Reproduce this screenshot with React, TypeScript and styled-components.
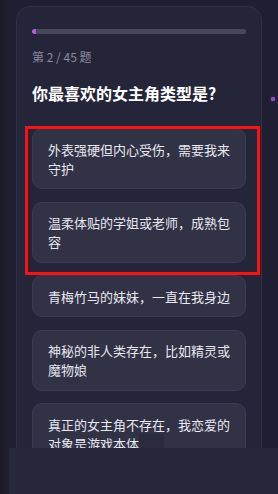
import styled, { createGlobalStyle } from 'styled-components';

const options = [
	'外表强硬但内心受伤，需要我来守护',
	'温柔体贴的学姐或老师，成熟包容',
	'青梅竹马的妹妹，一直在我身边',
	'神秘的非人类存在，比如精灵或魔物娘',
	'真正的女主角不存在，我恋爱的对象是游戏本体',
];

const current = 2;
const total = 45;

function App() {
	return (
		<>
			<GlobalStyle />
			<Page>
				<Card>
					<ProgressTrack>
						<ProgressFill style={{ width: `${(current / total) * 100}%` }} />
					</ProgressTrack>
					<Counter>
						第 {current} / {total} 题
					</Counter>
					<Title>你最喜欢的女主角类型是?</Title>
					<OptionList>
						{options.map((text) => (
							<Option key={text}>{text}</Option>
						))}
					</OptionList>
				</Card>
				<GlowDot />
				<Highlight />
				<CaretPatch />
				<BottomShade />
			</Page>
		</>
	);
}

const GlobalStyle = createGlobalStyle`
	html, body {
		margin: 0;
		padding: 0;
		background: #1c1c2d;
	}
	* {
		box-sizing: border-box;
	}
`;

const Page = styled.div`
	position: relative;
	height: 494px;
	overflow: hidden;
	padding: 6px 16px 0;
	background: linear-gradient(90deg, #1a1a29 0px, #1f1f31 9px, #1f1f31 100%);
	font-family: 'Noto Sans CJK SC', 'Noto Sans', sans-serif;
`;

const Card = styled.div`
	background: #25253a;
	border: 1px solid #2f2f46;
	border-radius: 14px;
	padding: 22px 15px 20px;
	min-height: 520px;
`;

const ProgressTrack = styled.div`
	height: 5px;
	border-radius: 3px;
	background: #47475c;
	overflow: hidden;
`;

const ProgressFill = styled.div`
	height: 100%;
	max-width: 4px;
	background: linear-gradient(90deg, #e055c8, #9b5cf0);
	border-radius: 3px 0 0 3px;
`;

const Counter = styled.div`
	margin-top: 15px;
	font-size: 12px;
	line-height: 16px;
	color: #8b8b9d;
`;

const Title = styled.h1`
	margin: 17px 0 0;
	font-size: 16px;
	line-height: 22px;
	font-weight: 700;
	color: #ffffff;
`;

const OptionList = styled.div`
	margin-top: 24px;
	display: flex;
	flex-direction: column;
	gap: 12.5px;
`;

const Option = styled.div`
	background: #323247;
	border: 1px solid #3a3a51;
	border-radius: 10px;
	padding: 10.5px 15px;
	font-size: 13px;
	line-height: 19px;
	color: #e8e8ef;
`;

const GlowDot = styled.div`
	position: absolute;
	left: 271px;
	top: 97px;
	width: 4px;
	height: 4px;
	border-radius: 1px;
	background: #8f48bd;
	box-shadow: 0 0 3px #5e2e85;
`;

const Highlight = styled.div`
	position: absolute;
	left: 25px;
	top: 126px;
	width: 235px;
	height: 149px;
	border: 3px solid #ff1010;
`;

const CaretPatch = styled.div`
	position: absolute;
	left: 139px;
	top: 434px;
	width: 25px;
	height: 14px;
	background: #2b2b40;
`;

const BottomShade = styled.div`
	position: absolute;
	left: 9px;
	right: 0;
	top: 448px;
	bottom: 0;
	background: #27273b;
`;

export default App;
